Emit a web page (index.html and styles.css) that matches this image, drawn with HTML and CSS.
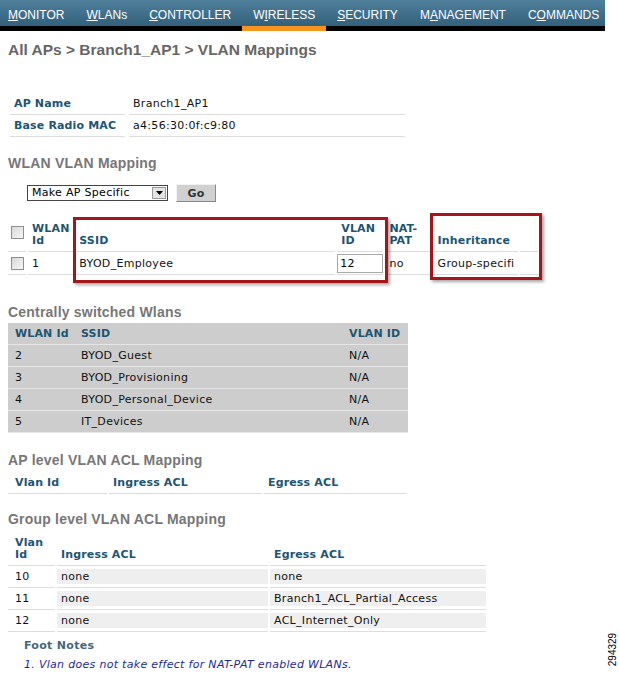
FILE: index.html
```html
<!DOCTYPE html>
<html>
<head>
    <meta charset="UTF-8">
    <title>VLAN Mappings</title>
    <link rel="stylesheet" href="styles.css">
</head>
<body>
<div class="topnav">
    <a class="first"><u>M</u>ONITOR</a>
    <a><u>W</u>LANs</a>
    <a><u>C</u>ONTROLLER</a>
    <a class="active">W<u>I</u>RELESS</a>
    <a><u>S</u>ECURITY</a>
    <a>M<u>A</u>NAGEMENT</a>
    <a>C<u>O</u>MMANDS</a>
</div>

<div class="content">
    <h1 class="pageTitle">All APs &gt; Branch1_AP1 &gt; VLAN Mappings</h1>

    <table class="infoTable">
        <tr>
            <th>AP Name</th>
            <td>Branch1_AP1</td>
        </tr>
        <tr>
            <th>Base Radio MAC</th>
            <td>a4:56:30:0f:c9:80</td>
        </tr>
    </table>

    <h2 class="section">WLAN VLAN Mapping</h2>

    <div class="actionRow">
        <div class="dropdown">
            <span class="dropdownText">Make AP Specific</span>
            <span class="dropdownBtn">
                <svg width="7" height="4" viewBox="0 0 7 4"><path d="M0 0h7L3.5 4z" fill="#000"/></svg>
            </span>
        </div>
        <button class="goBtn">Go</button>
    </div>

    <div class="mapWrap">
        <table class="mapTable">
            <tr>
                <th class="cCheck"><span class="chk"></span></th>
                <th class="cId">WLAN<br>Id</th>
                <th class="cSsid">SSID</th>
                <th class="cVlan">VLAN<br>ID</th>
                <th class="cNat">NAT-<br>PAT</th>
                <th class="cInh">Inheritance</th>
                <th class="cEnd"></th>
            </tr>
            <tr>
                <td class="cCheck"><span class="chk"></span></td>
                <td>1</td>
                <td>BYOD_Employee</td>
                <td><span class="vlanInput">12</span></td>
                <td>no</td>
                <td>Group-specifi</td>
                <td></td>
            </tr>
        </table>
        <div class="highlight hlOne"></div>
        <div class="highlight hlTwo"></div>
    </div>

    <h2 class="section centralTitle">Centrally switched Wlans</h2>
    <table class="centralTable">
        <tr>
            <th class="c1">WLAN Id</th>
            <th class="c2">SSID</th>
            <th class="c3">VLAN ID</th>
        </tr>
        <tr><td>2</td><td>BYOD_Guest</td><td>N/A</td></tr>
        <tr><td>3</td><td>BYOD_Provisioning</td><td>N/A</td></tr>
        <tr><td>4</td><td>BYOD_Personal_Device</td><td>N/A</td></tr>
        <tr><td>5</td><td>IT_Devices</td><td>N/A</td></tr>
    </table>

    <h2 class="section apTitle">AP level VLAN ACL Mapping</h2>
    <table class="aclTable apAcl">
        <tr>
            <th class="a1">Vlan Id</th>
            <th class="a2">Ingress ACL</th>
            <th class="a3">Egress ACL</th>
        </tr>
    </table>

    <h2 class="section groupTitle">Group level VLAN ACL Mapping</h2>
    <table class="aclTable groupAcl">
        <tr>
            <th class="g1">Vlan<br>Id</th>
            <th class="g2">Ingress ACL</th>
            <th class="g3">Egress ACL</th>
        </tr>
        <tr><td>10</td><td class="fill">none</td><td class="fill">none</td></tr>
        <tr><td>11</td><td class="fill">none</td><td class="fill">Branch1_ACL_Partial_Access</td></tr>
        <tr><td>12</td><td class="fill">none</td><td class="fill">ACL_Internet_Only</td></tr>
    </table>

    <div class="footNotes">
        <div class="footTitle">Foot Notes</div>
        <div class="footText">1. Vlan does not take effect for NAT-PAT enabled WLANs.</div>
    </div>
</div>

<div class="figId">294329</div>
</body>
</html>
```

FILE: styles.css
```css
body {
    margin: 0;
    background: #fff;
    font-family: "DejaVu Sans", Verdana, sans-serif;
    font-size: 11px;
    letter-spacing: 0.3px;
    color: #111;
    position: relative;
    min-height: 673px;
}

/* top menu */
.topnav {
    display: flex;
    width: 605px;
    height: 26px;
    background: linear-gradient(#4f7f9b, #33617c);
    border-bottom: 5px solid #000;
}

.topnav a {
    position: relative;
    flex-shrink: 0;
    height: 26px;
    box-sizing: border-box;
    padding: 2px 11px 0 11px;
    line-height: 26px;
    font-family: "Liberation Sans", Arial, sans-serif;
    font-size: 12px;
    letter-spacing: 0;
    color: #fff;
    white-space: nowrap;
}

.topnav a.first {
    padding-left: 8px;
}

.topnav a u {
    text-decoration-thickness: 1px;
    text-underline-offset: 1px;
}

.topnav a.active::after {
    content: "";
    position: absolute;
    left: 0;
    right: 0;
    top: 26px;
    height: 5px;
    background: #f7941d;
}

.content {
    padding: 0 8px;
}

.pageTitle {
    margin: 10px 0 0 0;
    font-family: "Liberation Sans", Arial, sans-serif;
    font-size: 15.5px;
    line-height: 18px;
    letter-spacing: 0;
    font-weight: bold;
    color: #666;
}

.section {
    margin: 0;
    font-family: "Liberation Sans", Arial, sans-serif;
    font-size: 14px;
    line-height: 16px;
    letter-spacing: 0.2px;
    font-weight: bold;
    color: #777;
}

th {
    font-weight: bold;
    letter-spacing: 0.15px;
    color: #1d5572;
    text-align: left;
}

/* AP name / MAC */
.infoTable {
    margin: 34px 0 0 -2px;
    width: 403px;
    border-collapse: separate;
    border-spacing: 4px 0;
}

.infoTable th, .infoTable td {
    height: 21px;
    padding: 0 4px;
    border-bottom: 1px solid #ddd;
    white-space: nowrap;
}

.infoTable th {
    width: 107px;
}

.infoTable + .section {
    margin-top: 18px;
}

.actionRow {
    display: flex;
    align-items: center;
    gap: 8px;
    margin: 13px 0 0 19px;
}

.dropdown {
    display: flex;
    align-items: center;
    width: 139px;
    height: 14px;
    border: 1px solid #444;
    background: #fff;
}

.dropdownText {
    flex: 1;
    padding-left: 4px;
    line-height: 14px;
    color: #000;
}

.dropdownBtn {
    display: flex;
    align-items: center;
    justify-content: center;
    width: 14px;
    height: 12px;
    margin-right: 1px;
    background: #e4e4e4;
    border: 1px solid #9a9a9a;
    box-sizing: border-box;
}

.goBtn {
    width: 40px;
    height: 18px;
    padding: 0;
    font-family: "DejaVu Sans", Verdana, sans-serif;
    font-size: 11px;
    font-weight: bold;
    letter-spacing: 0.3px;
    color: #333;
    background: #d0d0d0;
    border: 1px solid;
    border-color: #f2f2f2 #8a8a8a #8a8a8a #f2f2f2;
}

/* WLAN VLAN mapping table */
.mapWrap {
    position: relative;
    margin-top: 7px;
}

.mapTable {
    width: 534px;
    margin-left: -2px;
    border-collapse: separate;
    border-spacing: 2px 0;
    table-layout: fixed;
}

.mapTable th, .mapTable td {
    padding: 0 0 0 4px;
    border-bottom: 1px solid #ddd;
    white-space: nowrap;
    overflow: hidden;
}

.mapTable th {
    height: 30px;
    vertical-align: bottom;
    line-height: 12px;
    padding-bottom: 4px;
}

.mapTable td {
    height: 22px;
}

.mapTable th.cCheck, .mapTable td.cCheck {
    padding-left: 3px;
    vertical-align: middle;
}

.mapTable th.cCheck { padding-top: 8px; }

.cCheck { width: 15px; }
.cId { width: 41px; }
.cSsid { width: 255px; }
.cVlan { width: 42px; }
.cNat { width: 42px; }
.cInh { width: 80px; }
.cEnd { width: 14px; }

.chk {
    display: block;
    width: 11px;
    height: 11px;
    border: 1px solid #8f8f8f;
    background: linear-gradient(135deg, #d8d8d8, #f6f6f6);
}

.vlanInput {
    display: block;
    width: 42px;
    height: 17px;
    padding-left: 2px;
    line-height: 17px;
    border: 1px solid #a9a9a9;
    color: #000;
}

.mapTable td .vlanInput { margin-left: -4px; }

.highlight {
    position: absolute;
    border: 3px solid #a3161b;
    box-shadow: 2px 2px 3px rgba(0, 0, 0, 0.35);
}

.hlOne {
    left: 65px;
    top: 8px;
    width: 309px;
    height: 60px;
}

.hlTwo {
    left: 422px;
    top: 4px;
    width: 106px;
    height: 61px;
}

/* centrally switched */
.centralTitle {
    margin-top: 29px;
}

.centralTable {
    margin-top: 3px;
    width: 400px;
    border-collapse: collapse;
    background: #cdcdcd;
}

.centralTable th, .centralTable td {
    height: 21px;
    padding: 0 0 0 7px;
    border-bottom: 1px solid #e6e6e6;
}

.centralTable td {
    color: #111;
}

.centralTable .c1 { width: 59px; }
.centralTable .c3 { width: 59px; }

/* acl tables */
.aclTable {
    border-collapse: separate;
    border-spacing: 2px 0;
    margin-left: -2px;
}

.aclTable th, .aclTable td {
    padding: 0 0 0 4px;
    border-bottom: 1px solid #ddd;
    white-space: nowrap;
}

.apTitle {
    margin-top: 19px;
}

.apAcl {
    margin-top: 4px;
    width: 403px;
}

.apAcl th {
    height: 21px;
}

.apAcl .a1 { width: 92px; padding-left: 7px; }
.apAcl .a2 { width: 149px; }

.groupTitle {
    margin-top: 17px;
}

.groupAcl {
    margin-top: 6px;
    width: 482px;
}

.groupAcl th {
    height: 28px;
    line-height: 12px;
    vertical-align: bottom;
    padding-bottom: 4px;
}

.groupAcl td {
    height: 21px;
}

.groupAcl .g1 { width: 40px; padding-left: 7px; }
.groupAcl .g2 { width: 207px; }
.groupAcl tr td:first-child { padding-left: 7px; }

.groupAcl td.fill {
    background: #efefef;
    box-shadow: inset 0 3px #fff, inset 0 -3px #fff;
}

.footNotes {
    margin: 6px 0 0 16px;
}

.footTitle {
    font-weight: bold;
    color: #456878;
    line-height: 16px;
}

.footText {
    margin-top: 3px;
    font-style: italic;
    color: #1c2a96;
    line-height: 16px;
}

.figId {
    position: absolute;
    left: 596px;
    top: 644px;
    font-family: "Liberation Sans", Arial, sans-serif;
    font-size: 10px;
    letter-spacing: 0;
    transform: rotate(-90deg);
    color: #000;
}
```
